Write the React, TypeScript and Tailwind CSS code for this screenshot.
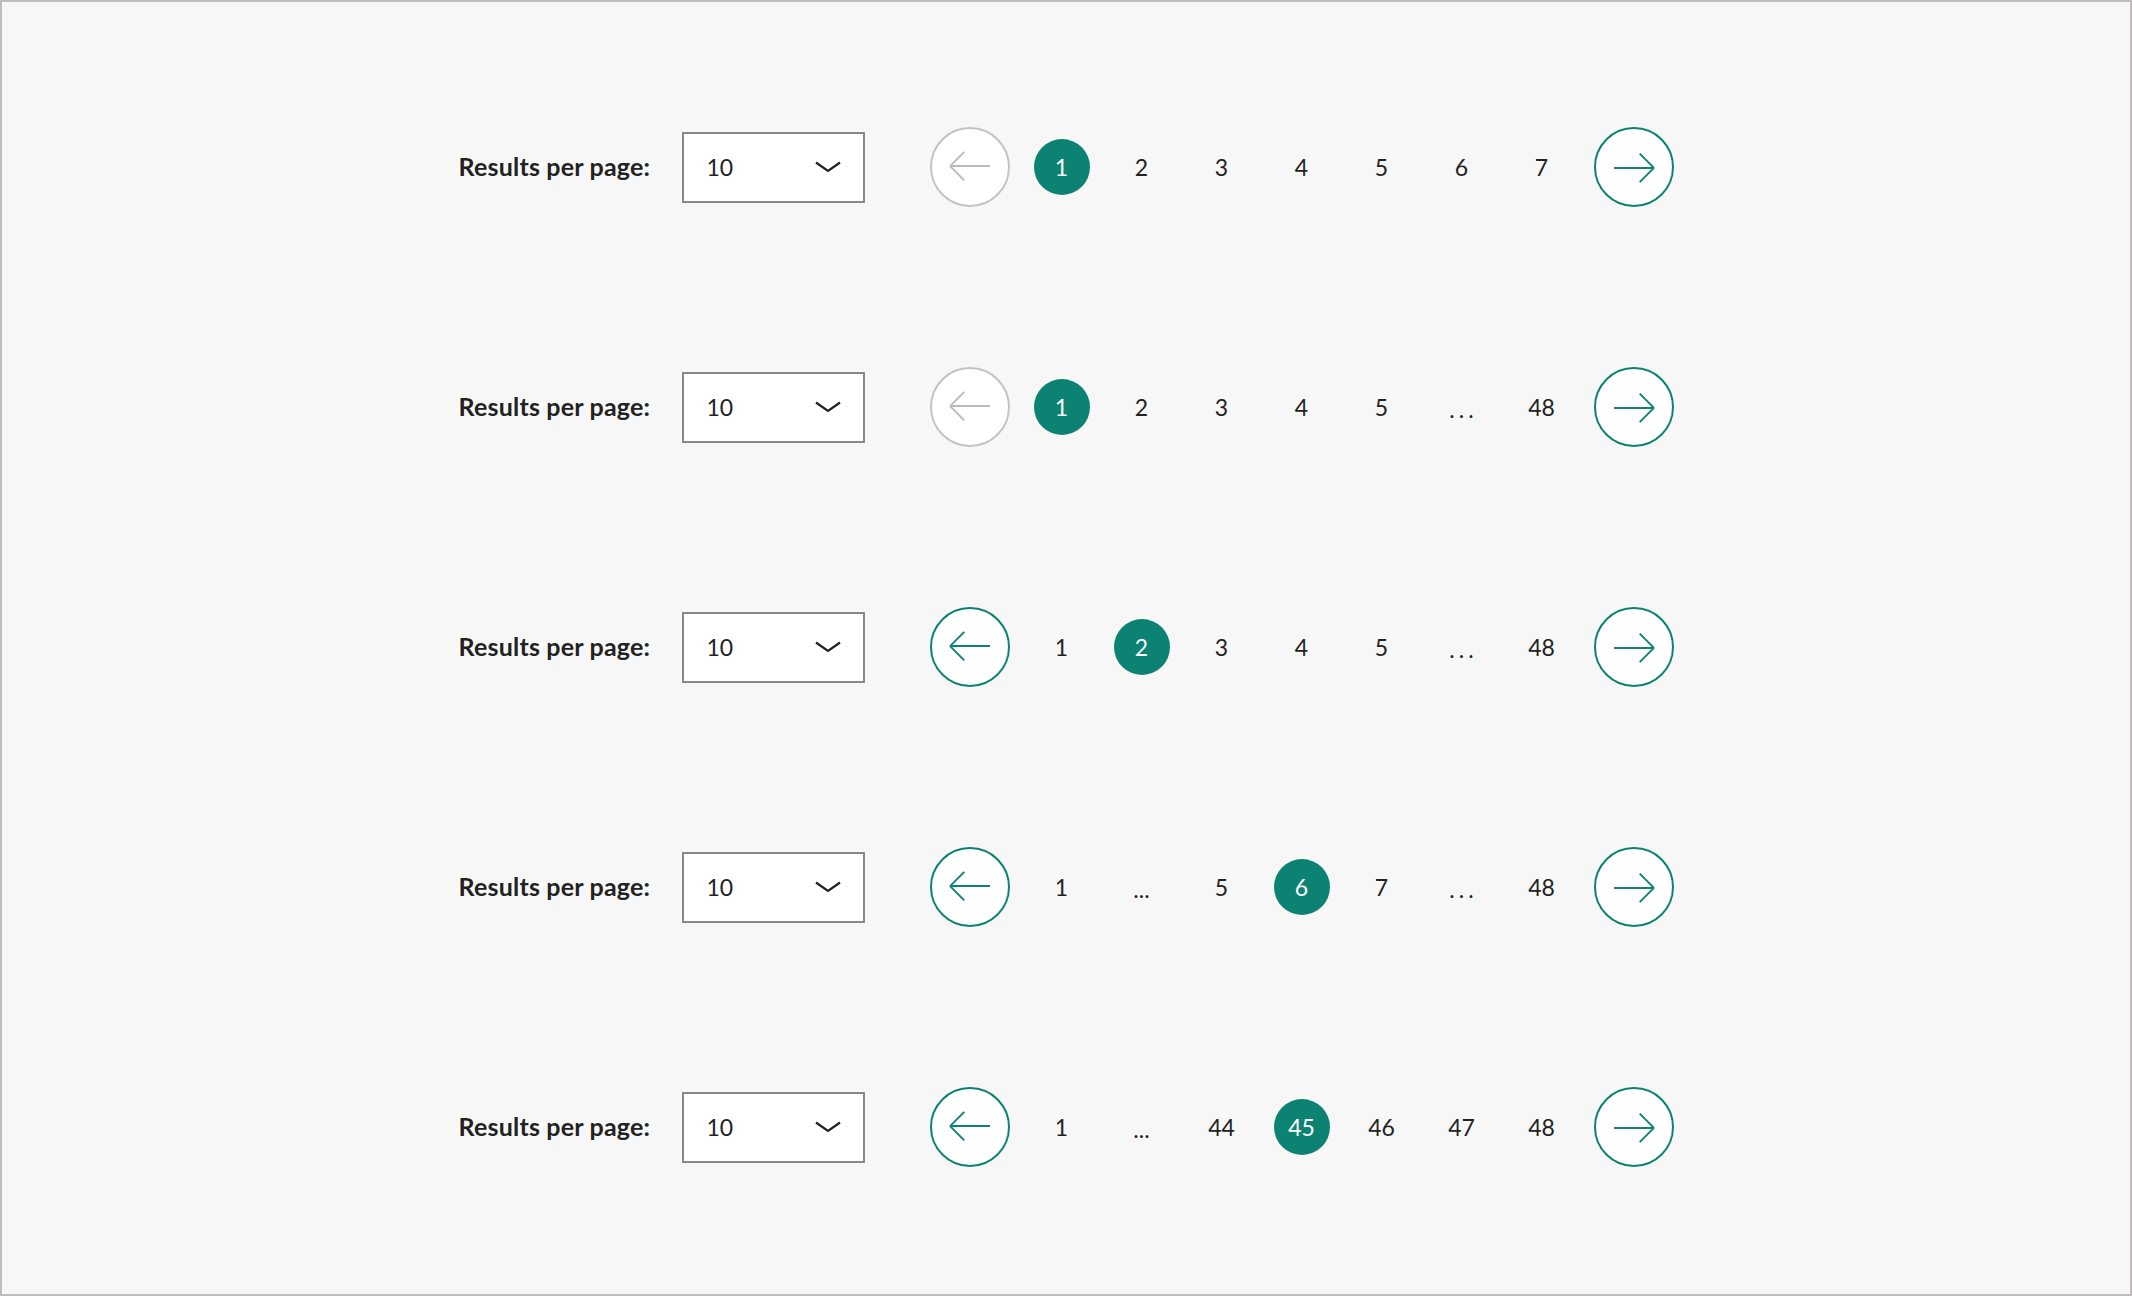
import React from "react";

type Item = number | "gap" | "dots";

const rows: { active: number; first: boolean; items: Item[] }[] = [
  { active: 1, first: true, items: [1, 2, 3, 4, 5, 6, 7] },
  { active: 1, first: true, items: [1, 2, 3, 4, 5, "dots", 48] },
  { active: 2, first: false, items: [1, 2, 3, 4, 5, "dots", 48] },
  { active: 6, first: false, items: [1, "gap", 5, 6, 7, "dots", 48] },
  { active: 45, first: false, items: [1, "gap", 44, 45, 46, 47, 48] },
];

const Arrow: React.FC<{ dir: "left" | "right"; disabled?: boolean }> = ({ dir, disabled }) => (
  <button
    className={`w-[80px] h-[80px] rounded-full bg-white border-2 flex items-center justify-center shrink-0 ${
      disabled ? "border-[#c6c2c2]" : "border-[#0c8273]"
    }`}
  >
    <svg width="80" height="80" viewBox="0 0 80 80" fill="none" className={dir === "right" ? "rotate-180" : ""}>
      <path
        d="M19 39H61M19 39L34 24M19 39L34 54"
        stroke={disabled ? "#bdb9b9" : "#0c8273"}
        strokeWidth="2"
      />
    </svg>
  </button>
);

const Chevron: React.FC = () => (
  <svg width="26" height="12" viewBox="0 0 26 12" fill="none">
    <path d="M1 1.5L13 10L25 1.5" stroke="#222" strokeWidth="2.2" />
  </svg>
);

const Row: React.FC<{ active: number; first: boolean; items: Item[] }> = ({ active, first, items }) => (
  <div className="flex items-center">
    <div className="w-[223px] text-[25px] font-bold text-[#222] tracking-[0.2px]">Results per page:</div>
    <div className="w-[183px] h-[71px] border-2 border-[#8b8785] bg-white flex items-center justify-between pl-[23px] pr-[22px]">
      <span className="text-[23px] text-[#222]">10</span>
      <Chevron />
    </div>
    <div className="ml-[65px] flex items-center gap-[12px]">
      <Arrow dir="left" disabled={first} />
      <div className="flex items-center">
        {items.map((it, i) => (
          <div key={i} className="w-[80px] h-[80px] flex items-center justify-center text-[23px] text-[#222]">
            {it === "gap" ? (
              <span className="pt-[4px]">...</span>
            ) : it === "dots" ? (
              <span className="tracking-[4px] pl-[4px] pt-[4px]">...</span>
            ) : it === active ? (
              <span className="w-[56px] h-[56px] rounded-full bg-[#0c8273] text-white flex items-center justify-center">
                {it}
              </span>
            ) : (
              <span>{it}</span>
            )}
          </div>
        ))}
      </div>
      <Arrow dir="right" />
    </div>
  </div>
);

export default function App() {
  return (
    <div
      className="w-full h-screen bg-[#f7f7f7] border-2 border-[#c0bcbc] flex flex-col items-center justify-center gap-[160px] pb-[2px]"
      style={{ fontFamily: "Lato, 'Open Sans', sans-serif" }}
    >
      {rows.map((r, i) => (
        <Row key={i} {...r} />
      ))}
    </div>
  );
}
